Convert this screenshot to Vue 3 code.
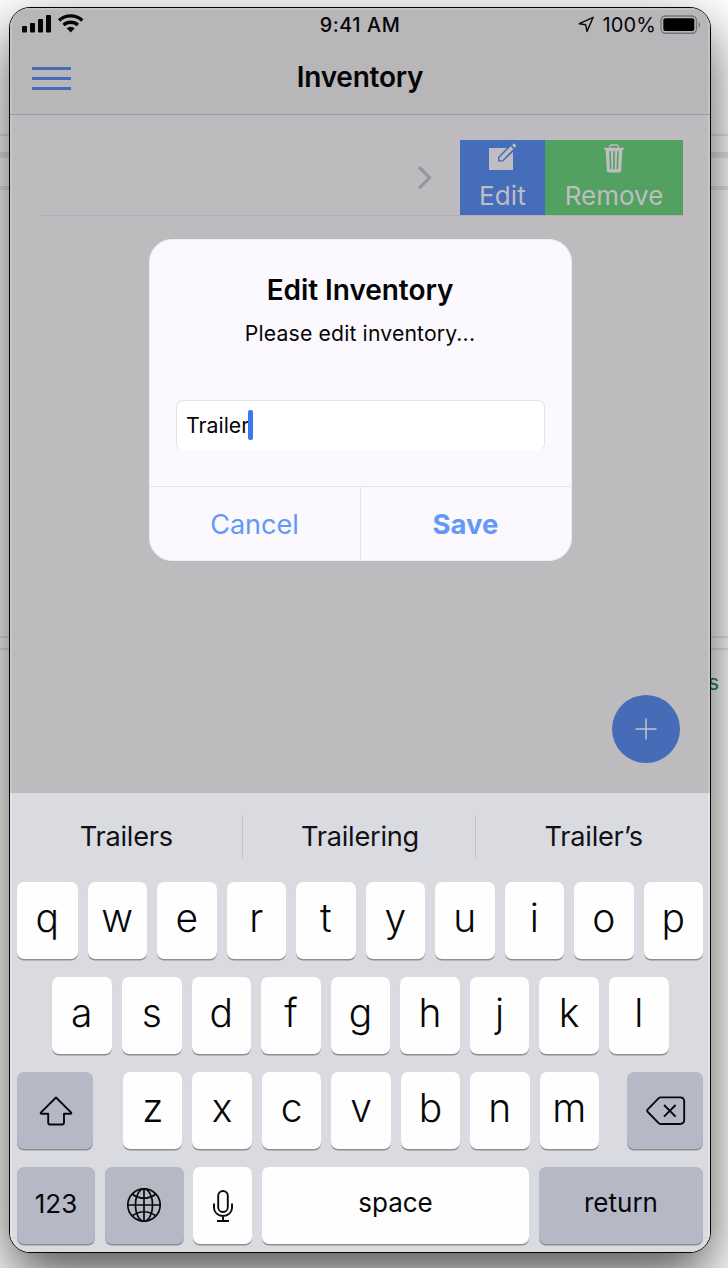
<script setup>
const rowOne = [...'qwertyuiop']
const rowTwo = [...'asdfghjkl']
const rowThree = [...'zxcvbnm']
const suggestions = ['Trailers', 'Trailering', 'Trailer’s']
</script>

<template>
  <div class="desktop">
    <div class="rule r1"></div>
    <div class="rule r2"></div>
    <div class="rule r3"></div>
    <div class="rule r4"></div>
    <div class="rule r5"></div>
    <span class="behind">s</span>
    <div class="shade"></div>

    <div class="phone">
      <div class="screen">
        <header class="top">
          <div class="status">
            <svg class="signal" width="62" height="20" viewBox="0 0 62 20">
              <rect x="0" y="12" width="5" height="6.500" rx="1" />
              <rect x="8" y="9" width="5" height="9.500" rx="1" />
              <rect x="16" y="5" width="5" height="13.500" rx="1" />
              <rect x="24" y="1" width="5" height="17.500" rx="1" />
              <g fill="none" stroke="#050507" stroke-width="3.300">
                <path d="M37.100 6.500a17 17 0 0 1 23.200 0" />
                <path d="M41.500 11a10.800 10.800 0 0 1 14.400 0" />
              </g>
              <path d="M44.700 14.200a6 6 0 0 1 8 0L48.700 18.400z" />
            </svg>
            <span class="time">9:41 AM</span>
            <div class="power">
              <svg width="17" height="17" viewBox="0 0 17 17">
                <path d="M1.300 7.700 15.200 1.300 9 15.400 7.600 8.700z" fill="none" stroke="#09090b" stroke-width="1.400" stroke-linejoin="round" />
              </svg>
              <span class="pct">100%</span>
              <svg width="42" height="20" viewBox="0 0 42 20">
                <rect x="1" y="1" width="35.500" height="17.300" rx="4.500" fill="none" stroke="#77757a" stroke-width="1.400" />
                <rect x="3.300" y="3.300" width="31" height="12.700" rx="2" />
                <path d="M38.600 6.700a3.600 3.600 0 0 1 0 6z" fill="#77757a" />
              </svg>
            </div>
          </div>
          <div class="titlebar">
            <div class="burger"><i></i><i></i><i></i></div>
            <h1>Inventory</h1>
          </div>
        </header>

        <main class="content">
          <div class="item">
            <div class="row-space">
              <svg width="16" height="26" viewBox="0 0 16 26">
                <path d="M2 2 12.600 12.700 2 23.400" fill="none" stroke="#98969a" stroke-width="3.200" />
              </svg>
            </div>
            <div class="action edit">
              <svg width="30" height="28" viewBox="0 0 30 28">
                <path d="M1 5h24v22H1z" fill="#bfbdc1" />
                <path d="M10 18.600V14L24.800-1 30 4.100 15 18.600z" fill="#456db9" />
                <path d="M11.500 17.200V14.600L22.800 3.300l2.600 2.600L14.200 17.200zM24 2.200l1.400-1.400q.6-.5 1.200 0l1.400 1.400q.5.600 0 1.200L26.600 4.800z" fill="#bfbdc1" />
              </svg>
              <span>Edit</span>
            </div>
            <div class="action remove">
              <svg width="22" height="29" viewBox="0 0 22 29">
                <path d="M6.800 4V2.600Q6.800 1 8.400 1h5.200q1.600 0 1.600 1.600V4" fill="none" stroke="#bfbdc1" stroke-width="1.400" />
                <path d="M1 3.700h20v1.700h-1.600l-1.200 21q-.2 2-2 2H5.800q-1.800 0-2-2l-1.200-21H1z" fill="#bfbdc1" />
                <path d="M7 7.300l.7 18M11 7.300v18M15 7.300l-.7 18" stroke="#52a160" stroke-width="1.600" />
              </svg>
              <span>Remove</span>
            </div>
          </div>
          <button class="fab">
            <svg width="22" height="22" viewBox="0 0 22 22"><path d="M11 .5v21M.5 11h21" stroke="#c3c4cb" stroke-width="1.500" /></svg>
          </button>
        </main>

        <section class="keyboard">
          <div class="suggestions">
            <div v-for="word in suggestions" :key="word" class="suggestion">{{ word }}</div>
          </div>
          <div class="keys wide-first">
            <div v-for="k in rowOne" :key="k" class="key">{{ k }}</div>
          </div>
          <div class="keys wide-first second">
            <div v-for="k in rowTwo" :key="k" class="key">{{ k }}</div>
          </div>
          <div class="keys">
            <div class="key dark shift">
              <svg width="34" height="30" viewBox="0 0 34 30">
                <path d="M17 1.500 32 16.400q.9 1.200-.6 1.400H25V26.600q0 1.900-1.900 1.900H11.100q-1.900 0-1.900-1.900V17.800H2.600q-1.500-.2-.6-1.400z" fill="none" stroke="#08080b" stroke-width="1.900" stroke-linejoin="round" />
              </svg>
            </div>
            <div class="letters">
              <div v-for="k in rowThree" :key="k" class="key">{{ k }}</div>
            </div>
            <div class="key dark back">
              <svg width="40" height="30" viewBox="0 0 40 30">
                <path d="M14.500 1.400H34q4.200 0 4.200 4.200V23.800q0 4.200-4.200 4.200H14.500q-1 0-1.800-.8L1.800 16q-1.200-1.300 0-2.600L12.700 2.200q.8-.8 1.800-.8z" fill="none" stroke="#08080b" stroke-width="1.900" stroke-linejoin="round" />
                <path d="M18 9 29.600 20.600M29.600 9 18 20.600" stroke="#08080b" stroke-width="1.900" />
              </svg>
            </div>
          </div>
          <div class="keys last">
            <div class="key dark num">123</div>
            <div class="key dark globe">
              <svg width="36" height="36" viewBox="0 0 36 36" fill="none" stroke="#08080b" stroke-width="1.700">
                <circle cx="18" cy="18" r="16.200" />
                <ellipse cx="18" cy="18" rx="8.600" ry="16.200" />
                <path d="M18 1.800v32.400M1.800 18h32.400M6 7q12 8.500 24 0M6 29q12-8.500 24 0" />
              </svg>
            </div>
            <div class="key mic">
              <svg width="20" height="32" viewBox="0 0 20 32" fill="none" stroke="#08080b" stroke-width="1.900">
                <rect x="5.200" y="1" width="9.600" height="21" rx="4.800" />
                <path d="M1 13.500v4.500a9 8 0 0 0 18 0v-4.500M10 26v4.500M4 31h12" />
              </svg>
            </div>
            <div class="key space">space</div>
            <div class="key dark return">return</div>
          </div>
        </section>

        <div class="dialog">
          <h2>Edit Inventory</h2>
          <p>Please edit inventory...</p>
          <div class="field"><span>Trailer</span><i class="caret"></i></div>
          <div class="buttons">
            <div class="btn cancel">Cancel</div>
            <div class="btn save">Save</div>
          </div>
        </div>
      </div>
    </div>
  </div>
</template>

<style>
body { margin: 0; background: #fff; }
</style>

<style scoped>
* { box-sizing: border-box; }
.desktop {
  position: relative;
  width: 728px;
  height: 1268px;
  padding: 7px 0 0 9px;
  overflow: hidden;
  background: #fff;
  font-family: Inter, "Liberation Sans", sans-serif;
  color: #050507;
}
svg { display: block; flex: none; }
.rule { position: absolute; left: 0; width: 728px; background: #e8e8e8; }
.r1 { top: 134px; height: 2px; }
.r2 { top: 152px; height: 6px; }
.r3 { top: 186px; height: 4px; }
.r4 { top: 636px; height: 2px; }
.r5 { top: 648px; height: 2px; }
.behind { position: absolute; left: 708px; top: 670px; font-size: 21px; line-height: 25px; color: #23853a; }
.shade { position: absolute; left: 9px; top: 30px; width: 702px; height: 1246px; border-radius: 21px; background: #000; opacity: 0.68; filter: blur(28px); }
.phone {
  position: relative;
  width: 702px;
  height: 1246px;
  border: 1px solid #050505;
  border-radius: 21px;
  background: #dadbe1;
}
.screen {
  position: relative;
  display: flex;
  flex-direction: column;
  height: 1244px;
  border-radius: 20px;
  overflow: hidden;
}
.top { height: 107px; background: #b8b6b9; border-bottom: 1px solid #9c9a9e; box-shadow: inset 2px 2px #c3c2c5, inset -2px 0 #c3c2c5; }
.status { display: grid; grid-template-columns: 1fr auto 1fr; align-items: center; height: 33px; padding: 0 8px; }
.signal { margin-left: 3.500px; margin-top: -1px; fill: #050507; }
.time { font-size: 19.800px; font-weight: 500; letter-spacing: 0.600px; }
.power { display: flex; align-items: center; justify-content: flex-end; }
.pct { margin: 0 4px 0 8px; font-size: 20px; letter-spacing: 0.100px; }
.titlebar { position: relative; display: flex; justify-content: center; align-items: center; height: 72px; }
.burger { position: absolute; left: 22px; top: 26px; display: flex; flex-direction: column; gap: 7px; width: 39px; }
.burger i { height: 3px; background: #446cba; }
h1 { margin: 0; font-size: 28px; font-weight: 600; line-height: 36px; letter-spacing: -0.250px; }
.content { position: relative; height: 678px; padding: 25px 27px 0 28px; background: #bdbbbe; box-shadow: inset 2px 0 #c6c5c8, inset -2px 0 #c6c5c8; }
.item { display: flex; height: 76px; border-bottom: 1px solid #b1afb3; }
.row-space { flex: 1; display: flex; align-items: center; justify-content: flex-end; padding-right: 27.500px; }
.action { display: flex; flex-direction: column; align-items: center; height: 75px; color: #bfbdc1; font-size: 26px; line-height: 32px; }
.edit { width: 85px; padding-top: 3px; background: #456db9; }
.edit span { margin-top: 9px; letter-spacing: 0.200px; }
.remove { width: 138px; padding-top: 4px; background: #52a160; }
.remove span { margin-top: 7px; }
.fab { position: absolute; left: 602px; top: 580px; display: grid; place-items: center; width: 68px; height: 68px; padding: 0; border: 0; border-radius: 50%; background: #466cb8; }
.keyboard { display: flex; flex-direction: column; gap: 18px; height: 459px; padding: 22px 7px 0; background: #dadbe1; box-shadow: inset 2px 0 #e2e2e7, inset -2px 0 #e2e2e7; }
.suggestions { display: flex; height: 43px; margin: 0 -6px 6px -8px; }
.suggestion { flex: 1; display: grid; place-items: center; padding: 0 0 0 2px; font-size: 27.200px; line-height: 34px; letter-spacing: -0.250px; color: #111117; }
.suggestion + .suggestion { border-left: 1px solid #c1c2c9; }
.keys { display: flex; gap: 10px; height: 77px; }
.second { padding: 0 34.500px; }
.key { flex: 1 1 0; display: flex; align-items: center; justify-content: center; padding-bottom: 6px; border-radius: 7px; background: #fefefe; box-shadow: 0 1.500px 0 #8d8d92; font-size: 39px; font-weight: 300; line-height: 48px; color: #070709; }
.wide-first .key:first-child { flex: 0 0 60.500px; }
.letters { display: flex; flex: 1; gap: 10px; margin: 0 18px 0 20px; }
.dark { background: #b6b8c6; }
.shift, .back { flex: 0 0 76px; padding: 0 0 0 1px; }
.num { flex: 0 0 78px; }
.globe { flex: 0 0 78.500px; margin-right: -1px; padding: 0 0 1px; }
.mic { flex: 0 0 59.500px; padding: 0 0 0 1px; }
.return { flex: 0 0 164px; }
.num, .space, .return { padding-bottom: 5px; font-size: 26px; font-weight: 400; }
.num { padding-bottom: 3px; }
.dialog { position: absolute; left: 138.500px; top: 231px; width: 423px; height: 322px; display: flex; flex-direction: column; border: 1px solid #efedf1; border-radius: 23px; background: #fbf9fd; overflow: hidden; text-align: center; }
h2 { margin: 32px 0 0; font-size: 28px; font-weight: 600; line-height: 36px; letter-spacing: -0.050px; }
p { margin: 10px 0 0; font-size: 21.200px; line-height: 30px; letter-spacing: 0.150px; }
.field { display: flex; align-items: center; height: 51px; margin: 52px 26px 0; padding: 0 0 1px 9.500px; border: 1px solid #e3e2e5; border-bottom-color: #fdfcfe; border-radius: 7px; background: #fff; font-size: 21.300px; }
.caret { width: 5px; height: 30px; margin: -1px 0 0 -1.500px; border-radius: 2px; background: #3f76f0; }
.buttons { display: flex; height: 74px; margin-top: auto; border-top: 1px solid #e4e3e7; color: #6298f7; font-size: 27px; }
.btn { flex: 1 1 0; display: grid; place-items: center; }
.cancel { padding-top: 1px; }
.save { font-size: 27.500px; font-weight: 700; border-left: 1px solid #e4e3e7; }
</style>
